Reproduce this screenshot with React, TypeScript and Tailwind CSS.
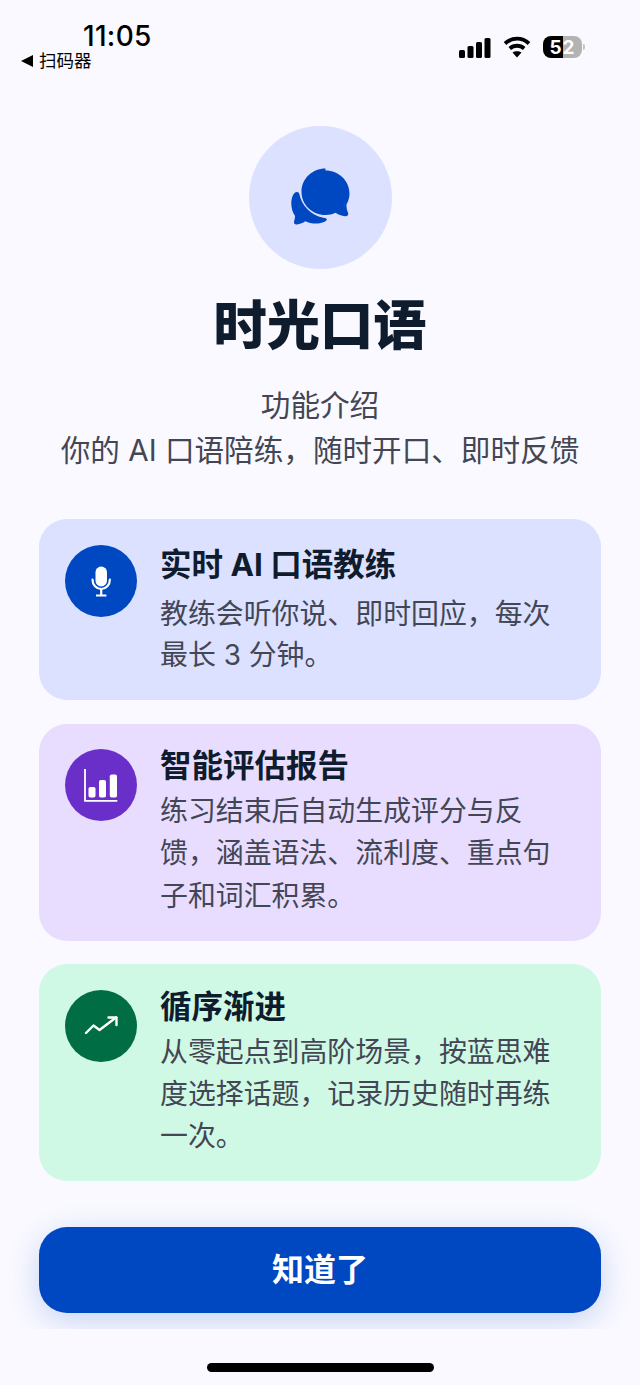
const font = { fontFamily: '"Inter", "Noto Sans CJK SC", sans-serif' };

function ChatIcon() {
  return (
    <svg className="ml-[1px] mt-[1px]" width="60" height="60" viewBox="290 168 60 60" fill="#0048c1">
      <path d="M324.500 168.500c-13.200 0-24 10.200-24 23.200 0 13 10.800 23.300 24 23.300 3.800 0 7-.8 10-2.200 2.500 1.800 6 3 9.500 3.400 2.500.3 3.800-1.400 3-3.500-1-2.200-1.600-5-1.500-8.200 1.800-3.200 3-7 3-10.800 0-13-10.800-23.200-24-23.200z" />
      <path d="M296 192c1.500 0 2 .8 2.300 2 2.200 11 11 21 24 23.800 2.500.5 4 .8 3.500 2-.5 1.500-3 2.800-7 3.400-5 .8-10 .2-14.500-2-2.500 1.700-5 2.800-8.500 3.200-2 .2-3.200-1-2.700-3 .5-1.800.9-3.500 1-5.500-2.500-3.500-3.800-8-3.800-12.500 0-4.200 1.500-11.400 5.700-11.400z" />
    </svg>
  );
}

function MicIcon() {
  return (
    <svg width="40" height="40" viewBox="81 561 40 40" fill="none" stroke="white" strokeWidth="2.200">
      <rect x="95.500" y="566.500" width="11.500" height="20" rx="5.700" fill="white" stroke="none" />
      <path d="M92.500 579.500c0 5.500 3.800 9.500 8.700 9.500s8.700-4 8.700-9.500" strokeLinecap="round" />
      <path d="M101.200 589v6M96 595.500h10.400" />
    </svg>
  );
}

function ChartIcon() {
  return (
    <svg width="40" height="40" viewBox="81 765 40 40" fill="white">
      <path d="M85 769v31.800h32.300" fill="none" stroke="white" strokeWidth="1.800" />
      <rect x="88.500" y="787" width="7" height="10.500" rx="1.800" />
      <rect x="99" y="780" width="7" height="17.500" rx="1.800" />
      <rect x="109.800" y="774.500" width="7.200" height="23" rx="1.800" />
    </svg>
  );
}

function TrendIcon() {
  return (
    <svg width="40" height="40" viewBox="81 1006 40 40" fill="none" stroke="white" strokeWidth="2.400" strokeLinecap="round" strokeLinejoin="round">
      <path d="M86 1033l7.500-7.500 6 4.500 16.500-12.500" />
      <path d="M108.500 1017.500h8v7.500" />
    </svg>
  );
}

function StatusBar() {
  return (
    <div className="flex justify-between h-[76px]">
      <div className="pl-[21px] pt-[19px]">
        <div className="ml-[62px] text-[28px] leading-[34px] font-medium text-black tracking-[0.3px]">11:05</div>
        <div className="flex items-center gap-[6px] text-[17.500px] leading-[20px] text-black -mt-[2px]">
          <span className="w-0 h-0 border-y-[6px] border-y-transparent border-r-[12px] border-r-black" />
          扫码器
        </div>
      </div>
      <div className="flex items-start gap-[12px] pt-[36px] pr-[58px]">
        <svg width="32" height="22" viewBox="0 0 32 22" fill="black">
          <rect x="0" y="14" width="6" height="8" rx="1.500" />
          <rect x="8.500" y="10" width="6" height="12" rx="1.500" />
          <rect x="17" y="6" width="6" height="16" rx="1.500" />
          <rect x="25.500" y="2" width="6" height="20" rx="1.500" />
        </svg>
        <svg width="28" height="22" viewBox="0 0 28 22" fill="none" stroke="black" strokeWidth="3.800">
          <path d="M2 7.500c7-6.500 17-6.500 24 0" />
          <path d="M6.800 12.500c4.200-3.700 10.200-3.700 14.400 0" />
          <path d="M14 21.500l-4.500-5c2.600-1.800 6.400-1.800 9 0z" fill="black" stroke="none" />
        </svg>
        <div className="relative">
          <div className="w-[39px] h-[22px] rounded-[8px] bg-[linear-gradient(90deg,#000_51%,#b3b3b3_51%)] flex items-center justify-center text-[19px] leading-none font-bold text-white tracking-[1px]">
            52
          </div>
          <span className="absolute left-[40px] top-[8px] w-[2px] h-[6px] rounded-r-full bg-[#c4c4c4]" />
        </div>
      </div>
    </div>
  );
}

type Feature = {
  title: string;
  body: string[];
  card: string;
  circle: string;
  icon: React.ReactNode;
  padTop: string;
  titleBox: string;
  bodyBox: string;
};

const features: Feature[] = [
  {
    title: "实时 AI 口语教练",
    body: ["教练会听你说、即时回应，每次", "最长 3 分钟。"],
    card: "bg-[#dbe1ff] h-[181px]",
    circle: "bg-[#0048c1]",
    icon: <MicIcon />,
    padTop: "pt-[26px]",
    titleBox: "h-[40px]",
    bodyBox: "leading-[41px] mt-[9px]",
  },
  {
    title: "智能评估报告",
    body: ["练习结束后自动生成评分与反", "馈，涵盖语法、流利度、重点句", "子和词汇积累。"],
    card: "bg-[#e9ddff] h-[217px]",
    circle: "bg-[#6a2fc9]",
    icon: <ChartIcon />,
    padTop: "pt-[25px]",
    titleBox: "h-[35px]",
    bodyBox: "leading-[42.500px] mt-[6px]",
  },
  {
    title: "循序渐进",
    body: ["从零起点到高阶场景，按蓝思难", "度选择话题，记录历史随时再练", "一次。"],
    card: "bg-[#d0f9e5] h-[217px]",
    circle: "bg-[#006d45]",
    icon: <TrendIcon />,
    padTop: "pt-[26px]",
    titleBox: "h-[34px]",
    bodyBox: "leading-[42px] mt-[7px]",
  },
];

function FeatureCard({ f }: { f: Feature }) {
  return (
    <div className={`flex gap-[23px] rounded-[28px] px-[26px] ${f.card} ${f.padTop}`}>
      <div className={`w-[72px] h-[72px] shrink-0 rounded-full flex items-center justify-center ${f.circle}`}>{f.icon}</div>
      <div className="flex-1">
        <div className={`flex items-center text-[31.500px] font-bold text-[#0f1c2e] ${f.titleBox}`}>{f.title}</div>
        <div className={`text-[27.900px] text-[#434654] ${f.bodyBox}`}>
          {f.body.map(line => <div key={line}>{line}</div>)}
        </div>
      </div>
    </div>
  );
}

export default function App() {
  return (
    <div className="w-[640px] h-[1385px] overflow-hidden bg-[#f9f9ff] flex flex-col" style={font}>
      <StatusBar />
      <div className="flex flex-col items-center pt-[50px]">
        <div className="w-[143px] h-[143px] rounded-full bg-[#dbe1ff] flex items-center justify-center">
          <ChatIcon />
        </div>
        <h1 className="mt-[24px] text-[53.300px] leading-[66px] font-black text-[#0f1c2e]">时光口语</h1>
        <div className="mt-[24px] text-center text-[29.600px] leading-[45px] text-[#434654]">
          <div>功能介绍</div>
          <div>你的 AI 口语陪练，随时开口、即时反馈</div>
        </div>
      </div>
      <div className="mt-[46px] px-[39px] flex flex-col gap-[23.500px]">
        {features.map(f => <FeatureCard key={f.title} f={f} />)}
      </div>
      <div className="mt-[8px] h-[140px] overflow-hidden px-[39px] pt-[38px]">
        <button className="w-full h-[86px] rounded-[28px] bg-[#0048c1] text-white text-[32px] font-bold shadow-[0_8px_32px_rgba(0,72,193,0.2)]">知道了</button>
      </div>
      <div className="flex justify-center pt-[34px]">
        <div className="w-[227px] h-[9px] rounded-full bg-black" />
      </div>
    </div>
  );
}
